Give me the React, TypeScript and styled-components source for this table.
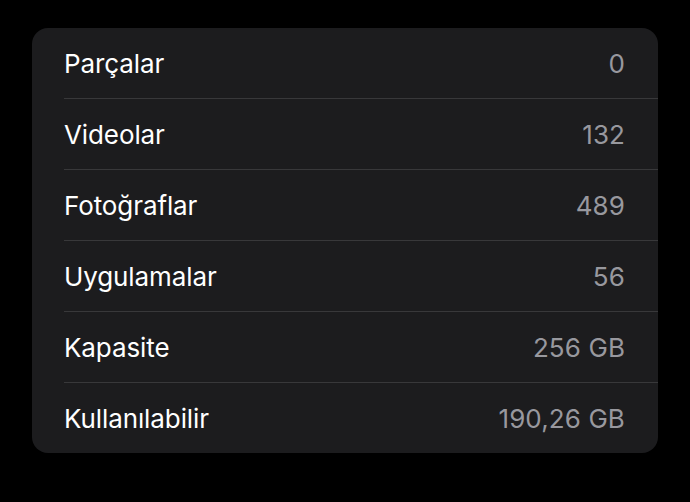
import React from "react";
import styled, { createGlobalStyle } from "styled-components";

const Global = createGlobalStyle`
  html, body { margin: 0; padding: 0; background: #000; }
  body { font-family: Inter, "Noto Sans", sans-serif; -webkit-font-smoothing: antialiased; }
`;

const Page = styled.div`
  width: 690px;
  height: 502px;
  background: #000;
  padding: 28px 32px 0 32px;
  box-sizing: border-box;
`;

const Card = styled.div`
  background: #1c1c1e;
  border-radius: 16px;
  overflow: hidden;
  display: flex;
  flex-direction: column;
`;

const Row = styled.div<{ $last?: boolean }>`
  height: 70px;
  display: flex;
  align-items: center;
  justify-content: space-between;
  margin-left: 32px;
  padding-right: 33px;
  border-bottom: ${(p) => (p.$last ? "none" : "1px solid #38383a")};
  box-sizing: content-box;
`;

const Label = styled.span`
  color: #ffffff;
  font-size: 26px;
  letter-spacing: -0.1px;
`;

const Value = styled.span`
  color: #98989e;
  font-size: 26px;
  letter-spacing: 0.1px;
`;

const rows: [string, string][] = [
  ["Parçalar", "0"],
  ["Videolar", "132"],
  ["Fotoğraflar", "489"],
  ["Uygulamalar", "56"],
  ["Kapasite", "256 GB"],
  ["Kullanılabilir", "190,26 GB"],
];

export default function App() {
  return (
    <>
      <Global />
      <Page>
        <Card>
          {rows.map(([l, v], i) => (
            <Row key={l} $last={i === rows.length - 1}>
              <Label>{l}</Label>
              <Value>{v}</Value>
            </Row>
          ))}
        </Card>
      </Page>
    </>
  );
}
